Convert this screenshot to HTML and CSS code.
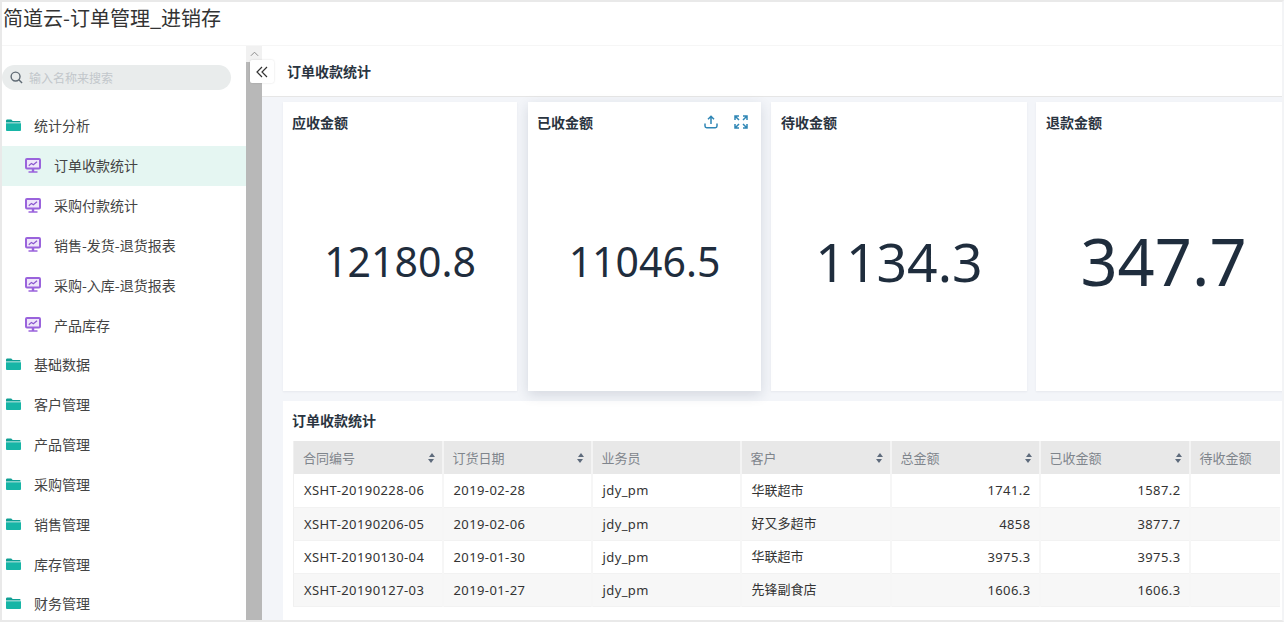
FILE: index.html
```html
<!DOCTYPE html>
<html lang="zh">
<head>
<meta charset="utf-8">
<title>简道云-订单管理_进销存</title>
<link rel="stylesheet" href="styles.css">
</head>
<body>
<svg class="defs" width="0" height="0">
  <symbol id="folder" viewBox="0 0 16 14"><path d="M1.4 1h4.200l1.500 1.600h7.500c.4 0 .9.4.9.9v.7H0V2.400C0 1.600.6 1 1.400 1z" fill="#0f9f94"/><path d="M0 5h16v7.300c0 .7-.6 1.200-1.200 1.200H1.200C.6 13.500 0 13 0 12.300z" fill="#17b5a6"/></symbol>
  <symbol id="screen" viewBox="0 0 16 15"><rect x="1" y="1" width="14" height="9.500" rx="1" fill="#efe6fa" stroke="#9a63dc" stroke-width="2"/><path d="M3.800 7.800l2.600-2.400 2 1.400 3.600-3" fill="none" stroke="#8a55cf" stroke-width="1.200"/><path d="M3.500 13.200h9v1.600h-9zM6.800 11h2.400v3H6.800z" fill="#9a63dc"/></symbol>
</svg>
<div class="app">
  <header class="topbar">简道云-订单管理_进销存</header>
  <div class="body">
    <aside class="sidebar">
      <div class="search">
        <svg class="search-icon" viewBox="0 0 14 14"><circle cx="6" cy="6" r="4.800" fill="none" stroke="#5f6a74" stroke-width="1.500"/><path d="M9.500 9.500L13 13" stroke="#5f6a74" stroke-width="1.500"/></svg>
        <span>输入名称来搜索</span>
      </div>
      <nav class="nav">
        <div class="item"><svg class="ic-folder"><use href="#folder"/></svg>统计分析</div>
        <div class="item sub active"><svg class="ic-screen"><use href="#screen"/></svg>订单收款统计</div>
        <div class="item sub"><svg class="ic-screen"><use href="#screen"/></svg>采购付款统计</div>
        <div class="item sub"><svg class="ic-screen"><use href="#screen"/></svg>销售-发货-退货报表</div>
        <div class="item sub"><svg class="ic-screen"><use href="#screen"/></svg>采购-入库-退货报表</div>
        <div class="item sub"><svg class="ic-screen"><use href="#screen"/></svg>产品库存</div>
        <div class="item"><svg class="ic-folder"><use href="#folder"/></svg>基础数据</div>
        <div class="item"><svg class="ic-folder"><use href="#folder"/></svg>客户管理</div>
        <div class="item"><svg class="ic-folder"><use href="#folder"/></svg>产品管理</div>
        <div class="item"><svg class="ic-folder"><use href="#folder"/></svg>采购管理</div>
        <div class="item"><svg class="ic-folder"><use href="#folder"/></svg>销售管理</div>
        <div class="item"><svg class="ic-folder"><use href="#folder"/></svg>库存管理</div>
        <div class="item"><svg class="ic-folder"><use href="#folder"/></svg>财务管理</div>
      </nav>
    </aside>
    <div class="scrollbar">
      <div class="scroll-up"><svg viewBox="0 0 10 6" class="scroll-arrow"><path d="M1 5l4-4 4 4" fill="none" stroke="#8b8b8b" stroke-width="1.100"/></svg></div>
      <div class="scroll-thumb"></div>
    </div>
    <button class="collapse"><svg viewBox="0 0 12 12"><path d="M6 1L1 6l5 5M11 1L6 6l5 5" fill="none" stroke="#333" stroke-width="1.200"/></svg></button>
    <main class="main">
      <div class="page-title">订单收款统计</div>
      <div class="content">
        <section class="cards">
          <article class="card c1"><h3>应收金额</h3><div class="value v41">12180.8</div></article>
          <article class="card c2 raised">
            <h3>已收金额</h3>
            <div class="tools">
              <svg viewBox="0 0 14 14"><path d="M7 9V1.500M4 4.200l3-3 3 3M1 8.500V11c0 1 .7 1.700 1.700 1.700h8.600c1 0 1.700-.7 1.700-1.700V8.500" fill="none" stroke="#2f86b5" stroke-width="1.500"/></svg>
              <svg viewBox="0 0 14 14"><path d="M1 5V1h4M9 1h4v4M13 9v4H9M5 13H1V9M1.500 1.500l3.500 3.500M12.500 1.500L9 5M12.500 12.500L9 9M1.500 12.500L5 9" fill="none" stroke="#2f86b5" stroke-width="1.500"/></svg>
            </div>
            <div class="value v41">11046.5</div>
          </article>
          <article class="card c3"><h3>待收金额</h3><div class="value v53">1134.3</div></article>
          <article class="card c4"><h3>退款金额</h3><div class="value v65">347.7</div></article>
        </section>
        <section class="panel">
          <h3>订单收款统计</h3>
          <table class="grid">
            <colgroup><col class="w149"><col class="w149"><col class="w149"><col class="w150"><col class="w149"><col class="w150"><col class="w90"></colgroup>
            <thead>
              <tr>
                <th>合同编号<i class="sort"></i></th>
                <th>订货日期<i class="sort"></i></th>
                <th>业务员</th>
                <th>客户<i class="sort"></i></th>
                <th>总金额<i class="sort"></i></th>
                <th>已收金额<i class="sort"></i></th>
                <th>待收金额</th>
              </tr>
            </thead>
            <tbody>
              <tr><td>XSHT-20190228-06</td><td>2019-02-28</td><td>jdy_pm</td><td class="cn">华联超市</td><td class="num">1741.2</td><td class="num">1587.2</td><td></td></tr>
              <tr><td>XSHT-20190206-05</td><td>2019-02-06</td><td>jdy_pm</td><td class="cn">好又多超市</td><td class="num">4858</td><td class="num">3877.7</td><td></td></tr>
              <tr><td>XSHT-20190130-04</td><td>2019-01-30</td><td>jdy_pm</td><td class="cn">华联超市</td><td class="num">3975.3</td><td class="num">3975.3</td><td></td></tr>
              <tr><td>XSHT-20190127-03</td><td>2019-01-27</td><td>jdy_pm</td><td class="cn">先锋副食店</td><td class="num">1606.3</td><td class="num">1606.3</td><td></td></tr>
            </tbody>
          </table>
        </section>
      </div>
    </main>
  </div>
</div>
</body>
</html>
```
FILE: styles.css
```css
* { box-sizing: border-box; }
html, body { margin: 0; height: 100%; overflow: hidden; }
body {
  font-family: "Noto Sans CJK SC", "Noto Sans", sans-serif;
  color: #333;
  background: #fff;
}
.defs { position: absolute; }
.app {
  width: 1284px;
  height: 622px;
  border: 2px solid #e9e9e9;
  border-right-color: #f3f4f6;
  display: flex;
  flex-direction: column;
  overflow: hidden;
  background: #fff;
}
.topbar {
  height: 44px;
  flex: none;
  padding: 0 0 0 1px;
  font-size: 20px;
  line-height: 32px;
  color: #333;
  background: #fff;
  border-bottom: 1px solid #f6f6f6;
}
.body { flex: 1; display: flex; min-height: 0; position: relative; }

.sidebar { width: 244px; flex: none; overflow: hidden; background: #fff; padding-top: 19px; }
.search {
  height: 25px;
  width: 229px;
  border-radius: 13px;
  background: #e9ecec;
  display: flex;
  align-items: center;
  gap: 6px;
  padding-left: 8px;
  font-size: 12px;
  color: #c2c7cb;
}
.search-icon { width: 13px; height: 13px; flex: none; }
.nav { margin-top: 16.400px; }
.item {
  height: 39.850px;
  display: flex;
  align-items: center;
  font-size: 14px;
  color: #444;
  padding: 0 0 2px 4px;
}
.item.sub { padding-left: 23px; }
.item.active { background: #e5f6f2; }
.ic-folder { width: 15px; height: 14px; margin-right: 13px; flex: none; }
.ic-screen { width: 16px; height: 15px; margin-right: 13px; flex: none; }

.scrollbar { width: 16px; flex: none; background: #b8b8b8; display: flex; flex-direction: column; }
.scroll-up { height: 16px; background: #f1f1f1; display: flex; align-items: center; justify-content: center; }
.scroll-arrow { width: 9px; height: 6px; }
.scroll-thumb { flex: 1; }
.collapse {
  position: absolute;
  left: 248px;
  top: 14px;
  width: 24px;
  height: 23px;
  padding: 0;
  border: 0;
  border-radius: 2px;
  background: #fff;
  box-shadow: 0 0 2px rgba(0,0,0,.15);
  display: flex;
  align-items: center;
  justify-content: center;
}
.collapse svg { width: 12px; height: 12px; }

.main { flex: 1; min-width: 0; display: flex; flex-direction: column; background: #f3f5f9; overflow: hidden; }
.page-title {
  height: 51px;
  flex: none;
  padding-left: 25px;
  background: #fff;
  border-bottom: 1px solid #e6e6e6;
  font-size: 14px;
  font-weight: 700;
  line-height: 50px;
  color: #2a3440;
}
.content { flex: 1; padding: 5px 0 0 21px; min-height: 0; }
.cards { display: flex; height: 289px; gap: 10px; }
.card { background: #fff; position: relative; display: flex; flex-direction: column; flex: none; box-shadow: 0 1px 2px rgba(30,40,70,.06); }
.c1 { width: 234px; margin-right: 1px; }
.c2 { width: 233px; }
.c3 { width: 256px; margin-right: -1px; }
.c4 { width: 255px; }
.raised { box-shadow: 0 4px 12px rgba(30,40,70,.14); z-index: 1; }
.card h3 { margin: 10px 0 0 9px; font-size: 14px; line-height: 20px; font-weight: 700; color: #2a3440; }
.c3 h3, .c4 h3 { margin-left: 10px; }
.tools { position: absolute; top: 13px; right: 13px; display: flex; gap: 16px; }
.tools svg { width: 14px; height: 14px; }
.value {
  flex: 1;
  display: flex;
  align-items: center;
  justify-content: center;
  font-family: "Noto Sans", sans-serif;
  color: #1f2d3d;
  padding-bottom: 1px;
}
.v41 { font-size: 41px; }
.v53 { font-size: 53.500px; }
.v65 { font-size: 65px; }

.panel { margin-top: 10px; width: 999px; height: 240px; background: #fff; padding: 9px 0 0 9px; }
.panel h3 { margin: 0 0 11px; font-size: 14px; line-height: 20px; font-weight: 700; color: #2a3440; }
.grid {
  border-collapse: collapse;
  table-layout: fixed;
  width: 986px;
  margin-left: 1px;
  font-size: 13px;
  border-left: 1px solid #f0f0f0;
}
.w149 { width: 149px; }
.w150 { width: 150px; }
.w90 { width: 90px; }
.grid th {
  position: relative;
  height: 33px;
  padding: 0 10px 0 9px;
  background: #e8e8e8;
  border-right: 2px solid #f4f4f4;
  color: #7f858c;
  font-weight: 400;
  text-align: left;
}
.grid th:last-child { border-right: 0; }
.grid td {
  height: 33px;
  padding: 0 10px;
  border-right: 2px solid #f6f6f6;
  border-bottom: 1px solid #f2f2f2;
  color: #333;
  font-family: "Noto Sans", "Noto Sans CJK SC", sans-serif;
  letter-spacing: .4px;
}
.grid td:last-child { border-right: 0; }
.grid tbody tr:nth-child(even) td { background: #f7f7f7; }
.grid .num { text-align: right; padding-right: 8px; }
.grid .cn { letter-spacing: 0; padding-bottom: 2px; font-family: "Noto Sans CJK SC", sans-serif; }
.sort {
  position: absolute;
  right: 7px;
  top: 12px;
  width: 0;
  height: 0;
  border-left: 3.500px solid transparent;
  border-right: 3.500px solid transparent;
  border-bottom: 4.500px solid #5e6b7c;
}
.sort::after {
  content: "";
  position: absolute;
  left: -3.500px;
  top: 5.500px;
  width: 0;
  height: 0;
  border-left: 3.500px solid transparent;
  border-right: 3.500px solid transparent;
  border-top: 4.500px solid #5e6b7c;
}
```
